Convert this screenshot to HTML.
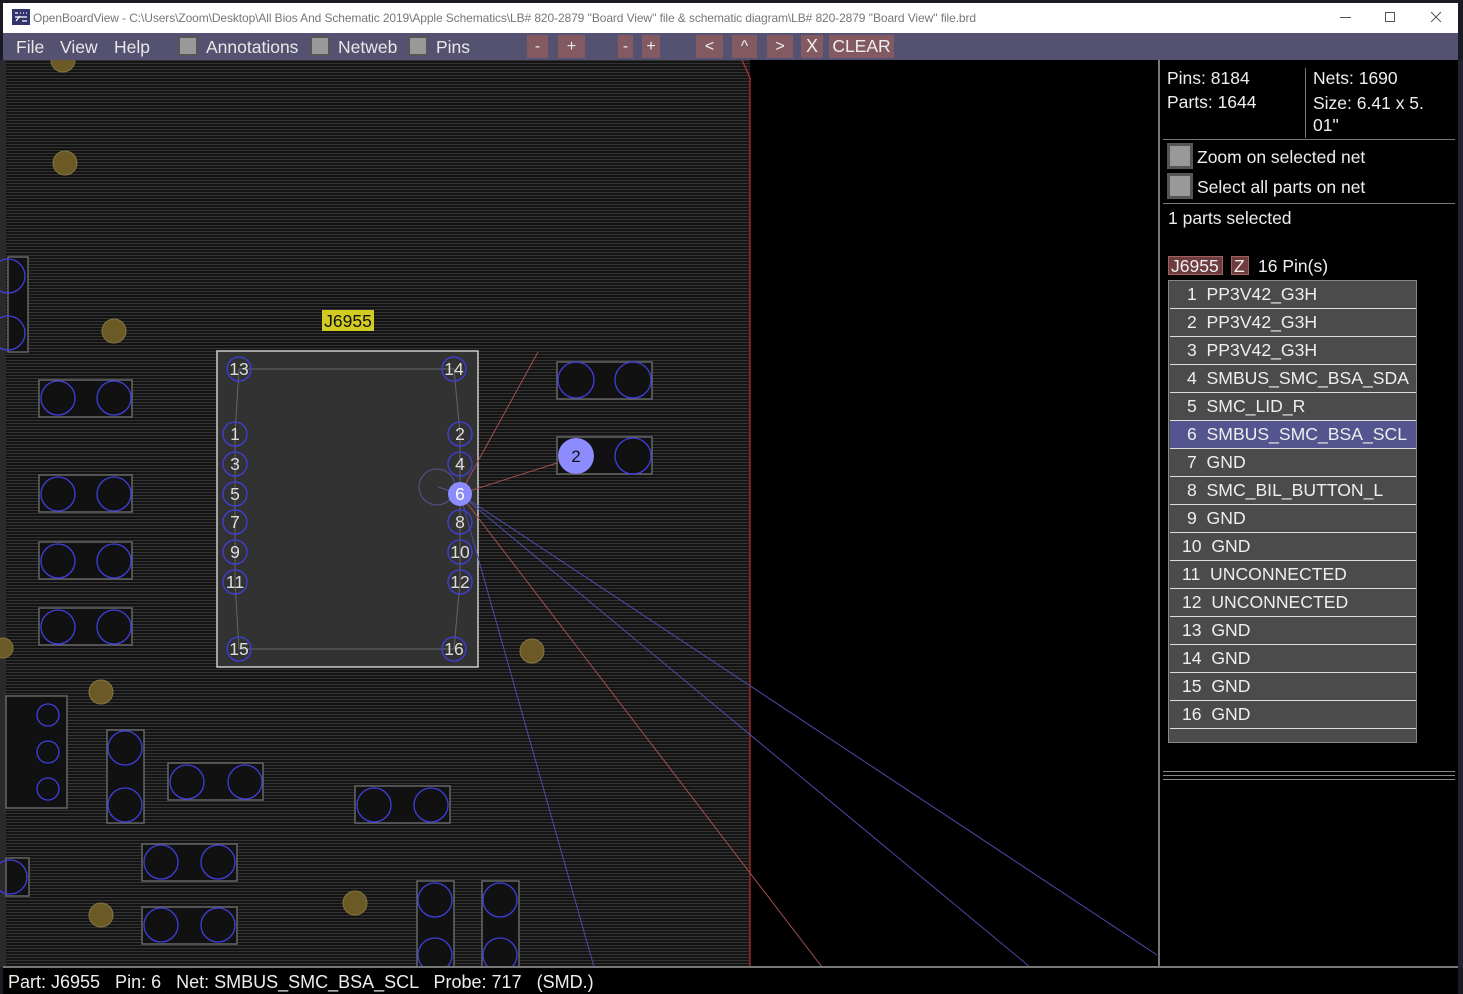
<!DOCTYPE html>
<html><head><meta charset="utf-8"><style>
*{margin:0;padding:0;box-sizing:border-box}
body{width:1463px;height:994px;overflow:hidden;background:#1a1a22;font-family:"Liberation Sans",sans-serif;position:relative}
.abs{position:absolute}
#title{left:3px;top:3px;width:1455px;height:30px;background:#fff;color:#777;font-size:12px}
#menu{left:3px;top:33px;width:1455px;height:27px;background:#545270;color:#e8e8e8;font-size:17.5px}
#menu span{position:absolute;top:4px}
.cb{position:absolute;top:3px;width:20px;height:20px;background:#999;border:2px solid #555}
.btn{position:absolute;top:2px;height:23px;background:#835a62;color:#eee;text-align:center;line-height:23px;font-size:16px}
.txt{color:#eee;font-size:17.5px;position:absolute}
#list{left:1168px;top:280px;width:249px;height:463px;background:#4b4b4b;border:1px solid #888}
.row{position:absolute;left:1px;width:246px;height:28px;border-bottom:1px solid #ddd;color:#eee;font-size:17.6px;line-height:26px}
</style></head><body>
<div class="abs" id="title">
<svg class="abs" style="left:9px;top:6px" width="18" height="16"><rect width="18" height="16" fill="#33336e"/><path d="M3 4h3M8 4h1M11 4h1M14 4h1M3 8h12M4 12l4-5M10 12h5" stroke="#fff" stroke-width="1.3"/></svg>
<div class="abs" style="left:30px;top:8px;letter-spacing:-0.1px">OpenBoardView - C:\Users\Zoom\Desktop\All Bios And Schematic 2019\Apple Schematics\LB# 820-2879 ''Board View'' file &amp; schematic diagram\LB# 820-2879 ''Board View'' file.brd</div>
<div class="abs" style="left:1337px;top:14px;width:11px;height:1px;background:#555"></div>
<div class="abs" style="left:1382px;top:9px;width:10px;height:10px;border:1px solid #555"></div>
<svg class="abs" style="left:1427px;top:8px" width="12" height="12"><path d="M1 1l10 10M11 1L1 11" stroke="#555"/></svg>
</div>
<div class="abs" id="menu">
<span style="left:13px">File</span><span style="left:57px">View</span><span style="left:111px">Help</span>
<div class="cb" style="left:175px"></div><span style="left:203px">Annotations</span>
<div class="cb" style="left:307px"></div><span style="left:335px">Netweb</span>
<div class="cb" style="left:405px"></div><span style="left:433px">Pins</span>
<div class="btn" style="left:524px;width:21px">-</div>
<div class="btn" style="left:555px;width:27px">+</div>
<div class="btn" style="left:615px;width:15px">-</div>
<div class="btn" style="left:639px;width:18px">+</div>
<div class="btn" style="left:693px;width:27px">&lt;</div>
<div class="btn" style="left:729px;width:25px">^</div>
<div class="btn" style="left:764px;width:26px">&gt;</div>
<div class="btn" style="left:798px;width:22px;font-size:18px">X</div>
<div class="btn" style="left:826px;width:65px;font-size:17.5px">CLEAR</div>
</div>
<svg class="abs" style="left:0;top:60px" width="1463" height="907">
<defs><pattern id="st" width="4" height="3" patternUnits="userSpaceOnUse"><rect width="4" height="3" fill="#141414"/><rect width="4" height="1" fill="#333"/></pattern></defs>
<rect x="0" y="0" width="1463" height="907" fill="#000"/>
<rect x="0" y="0" width="6" height="907" fill="#2a2a2e"/>
<rect x="6" y="0" width="744" height="907" fill="url(#st)"/>
<path d="M742 0L750 18V907" stroke="#c03030" fill="none" stroke-width="1.2"/>
<g transform="translate(0,-60)">
<g fill="#111" stroke="#666" stroke-width="1.5">
<rect x="8" y="257" width="20" height="95"/>
<rect x="39" y="380" width="93" height="37"/>
<rect x="39" y="475" width="93" height="37"/>
<rect x="39" y="542" width="93" height="37"/>
<rect x="39" y="608" width="93" height="37"/>
<rect x="6" y="696" width="61" height="112"/>
<rect x="107" y="730" width="37" height="93"/>
<rect x="168" y="763" width="95" height="37"/>
<rect x="355" y="786" width="95" height="37"/>
<rect x="142" y="844" width="95" height="37"/>
<rect x="142" y="907" width="95" height="37"/>
<rect x="417" y="881" width="37" height="90"/>
<rect x="482" y="881" width="37" height="90"/>
<rect x="6" y="858" width="23" height="38"/>
<rect x="557" y="362" width="95" height="37"/>
<rect x="557" y="437" width="95" height="37"/>
</g>
<g fill="none" stroke="#3f3fe0" stroke-width="1.3">
<circle cx="8" cy="276" r="17"/><circle cx="8" cy="333" r="17"/>
<circle cx="58" cy="398" r="17"/><circle cx="114" cy="398" r="17"/>
<circle cx="58" cy="494" r="17"/><circle cx="114" cy="494" r="17"/>
<circle cx="58" cy="561" r="17"/><circle cx="114" cy="561" r="17"/>
<circle cx="58" cy="627" r="17"/><circle cx="114" cy="627" r="17"/>
<circle cx="48" cy="715" r="11"/><circle cx="48" cy="752" r="11"/><circle cx="48" cy="789" r="11"/>
<circle cx="125" cy="748" r="17"/><circle cx="125" cy="805" r="17"/>
<circle cx="187" cy="782" r="17"/><circle cx="245" cy="782" r="17"/>
<circle cx="374" cy="805" r="17"/><circle cx="431" cy="805" r="17"/>
<circle cx="161" cy="862" r="17"/><circle cx="218" cy="862" r="17"/>
<circle cx="161" cy="925" r="17"/><circle cx="218" cy="925" r="17"/>
<circle cx="435" cy="900" r="17"/><circle cx="435" cy="955" r="17"/>
<circle cx="500" cy="900" r="17"/><circle cx="500" cy="955" r="17"/>
<circle cx="10" cy="877" r="17"/>
<circle cx="576" cy="380" r="18"/><circle cx="633" cy="380" r="18"/>
<circle cx="633" cy="456" r="18"/>
</g>
<g fill="#6b5a26" stroke="#857540" stroke-width="1">
<circle cx="63" cy="60" r="12"/><circle cx="65" cy="163" r="12"/><circle cx="114" cy="331" r="12"/>
<circle cx="101" cy="692" r="12"/><circle cx="101" cy="915" r="12"/><circle cx="355" cy="903" r="12"/>
<circle cx="532" cy="651" r="12"/><circle cx="3" cy="648" r="10"/>
</g>
<rect x="217" y="351" width="261" height="316" fill="#323232" stroke="#ccc" stroke-width="1.5"/>
<path d="M239 369H454L460 434V582L454 649H239L235 582V434Z" fill="none" stroke="#666" stroke-width="1"/>
<circle cx="437" cy="487" r="18" fill="none" stroke="#555590" stroke-width="1"/>
<path d="M438 487L460 494" stroke="#555590"/>
<g stroke-width="1">
<path d="M460 494L538 352M460 494L557 463M460 494L822 967" stroke="#a05050"/>
<path d="M460 494L594 967M460 494L1030 967M460 494L1157 955" stroke="#4a4aa8"/>
</g>
<circle cx="576" cy="456" r="18" fill="#8c8cff"/>
<text x="576" y="462" font-size="17" text-anchor="middle" fill="#111" font-family="Liberation Sans">2</text>
<g fill="none" stroke="#3f3fe0" stroke-width="1.3">
<circle cx="239" cy="369" r="12"/><circle cx="454" cy="369" r="12"/>
<circle cx="235" cy="434" r="12"/><circle cx="460" cy="434" r="12"/>
<circle cx="235" cy="464" r="12"/><circle cx="460" cy="464" r="12"/>
<circle cx="235" cy="494" r="12"/>
<circle cx="235" cy="522" r="12"/><circle cx="460" cy="522" r="12"/>
<circle cx="235" cy="552" r="12"/><circle cx="460" cy="552" r="12"/>
<circle cx="235" cy="582" r="12"/><circle cx="460" cy="582" r="12"/>
<circle cx="239" cy="649" r="12"/><circle cx="454" cy="649" r="12"/>
</g>
<circle cx="460" cy="494" r="12" fill="#8c8cff"/>
<g font-size="17.5" text-anchor="middle" fill="#ddd" font-family="Liberation Sans">
<text x="239" y="375">13</text><text x="454" y="375">14</text>
<text x="235" y="440">1</text><text x="460" y="440">2</text>
<text x="235" y="470">3</text><text x="460" y="470">4</text>
<text x="235" y="500">5</text><text x="460" y="500" fill="#fff">6</text>
<text x="235" y="528">7</text><text x="460" y="528">8</text>
<text x="235" y="558">9</text><text x="460" y="558">10</text>
<text x="235" y="588">11</text><text x="460" y="588">12</text>
<text x="239" y="655">15</text><text x="454" y="655">16</text>
</g>
<rect x="322" y="310" width="52" height="21" fill="#d2cc22"/>
<text x="348" y="327" font-size="17.5" text-anchor="middle" fill="#111" font-family="Liberation Sans">J6955</text>
</g>
<rect x="1158" y="0" width="2" height="907" fill="#777"/>
<rect x="1458" y="0" width="5" height="907" fill="#223"/>
</svg>
<!-- right panel -->
<div class="txt" style="left:1167px;top:68px">Pins: 8184</div>
<div class="txt" style="left:1167px;top:92px">Parts: 1644</div>
<div class="abs" style="left:1305px;top:68px;width:1px;height:70px;background:#777"></div>
<div class="txt" style="left:1313px;top:68px">Nets: 1690</div>
<div class="txt" style="left:1313px;top:92px;line-height:22px;width:140px">Size: 6.41 x 5.<br>01"</div>
<div class="abs" style="left:1163px;top:139px;width:292px;height:1px;background:#777"></div>
<div class="abs" style="left:1167px;top:143px;width:26px;height:26px;background:#999;border:3px solid #555"></div>
<div class="txt" style="left:1197px;top:147px">Zoom on selected net</div>
<div class="abs" style="left:1167px;top:173px;width:26px;height:26px;background:#999;border:3px solid #555"></div>
<div class="txt" style="left:1197px;top:177px">Select all parts on net</div>
<div class="abs" style="left:1163px;top:203px;width:292px;height:1px;background:#777"></div>
<div class="txt" style="left:1168px;top:208px">1 parts selected</div>
<div class="abs" style="left:1168px;top:256px;width:55px;height:19px;background:#6e3c3e;border:1px solid #a06060"></div>
<div class="txt" style="left:1171px;top:256px">J6955</div>
<div class="abs" style="left:1231px;top:256px;width:18px;height:19px;background:#6e3c3e;border:1px solid #a06060"></div>
<div class="txt" style="left:1234px;top:256px">Z</div>
<div class="txt" style="left:1258px;top:256px">16 Pin(s)</div>
<div class="abs" id="list">
<div class="row" style="top:0"><span style="padding-left:17px">1&nbsp; PP3V42_G3H</span></div>
<div class="row" style="top:28px"><span style="padding-left:17px">2&nbsp; PP3V42_G3H</span></div>
<div class="row" style="top:56px"><span style="padding-left:17px">3&nbsp; PP3V42_G3H</span></div>
<div class="row" style="top:84px"><span style="padding-left:17px">4&nbsp; SMBUS_SMC_BSA_SDA</span></div>
<div class="row" style="top:112px"><span style="padding-left:17px">5&nbsp; SMC_LID_R</span></div>
<div class="row" style="top:140px;background:#54548e"><span style="padding-left:17px">6&nbsp; SMBUS_SMC_BSA_SCL</span></div>
<div class="row" style="top:168px"><span style="padding-left:17px">7&nbsp; GND</span></div>
<div class="row" style="top:196px"><span style="padding-left:17px">8&nbsp; SMC_BIL_BUTTON_L</span></div>
<div class="row" style="top:224px"><span style="padding-left:17px">9&nbsp; GND</span></div>
<div class="row" style="top:252px"><span style="padding-left:12px">10&nbsp; GND</span></div>
<div class="row" style="top:280px"><span style="padding-left:12px">11&nbsp; UNCONNECTED</span></div>
<div class="row" style="top:308px"><span style="padding-left:12px">12&nbsp; UNCONNECTED</span></div>
<div class="row" style="top:336px"><span style="padding-left:12px">13&nbsp; GND</span></div>
<div class="row" style="top:364px"><span style="padding-left:12px">14&nbsp; GND</span></div>
<div class="row" style="top:392px"><span style="padding-left:12px">15&nbsp; GND</span></div>
<div class="row" style="top:420px"><span style="padding-left:12px">16&nbsp; GND</span></div>
</div>
<div class="abs" style="left:1163px;top:771px;width:292px;height:1px;background:#888"></div>
<div class="abs" style="left:1163px;top:775px;width:292px;height:1px;background:#888"></div>
<div class="abs" style="left:1163px;top:779px;width:292px;height:1px;background:#888"></div>
<!-- status -->
<div class="abs" style="left:3px;top:966px;width:1455px;height:28px;background:#000;border-top:2px solid #777"></div>
<div class="txt" style="left:8px;top:972px;white-space:pre;font-size:18px">Part: J6955   Pin: 6   Net: SMBUS_SMC_BSA_SCL   Probe: 717   (SMD.)</div>
</body></html>
